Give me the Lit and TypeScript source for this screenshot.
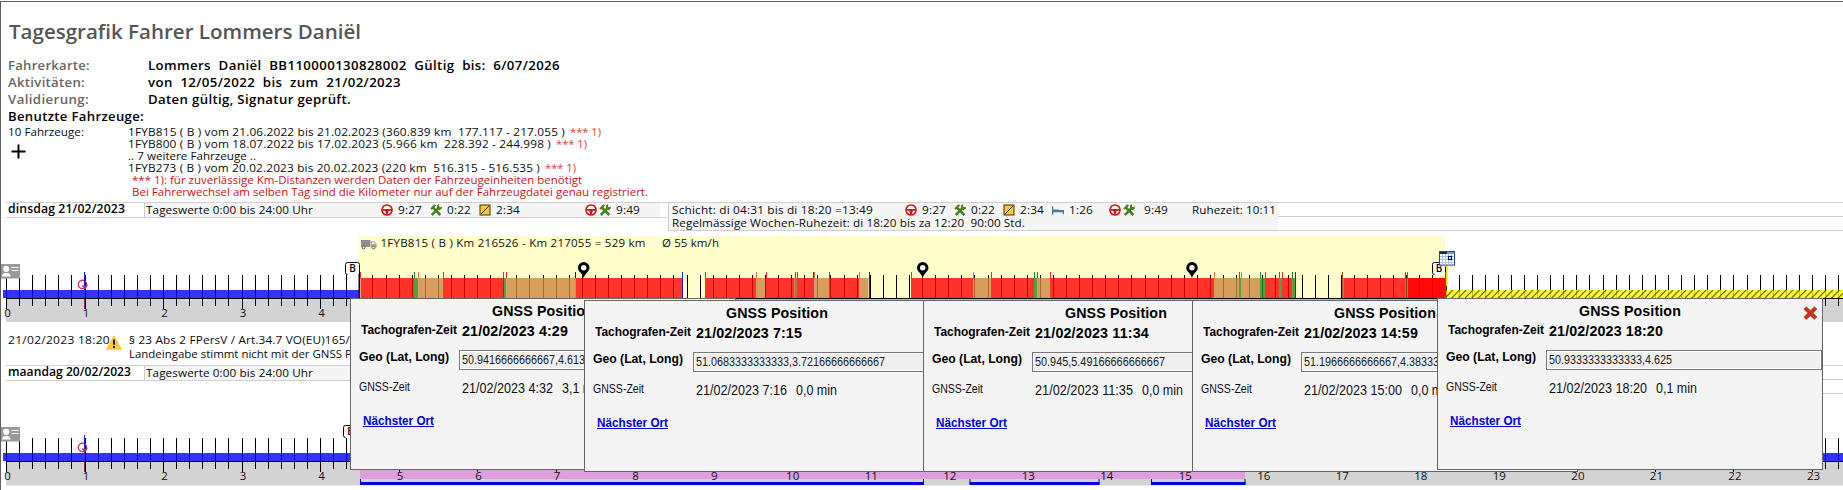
import { LitElement, html, svg, css } from "lit";
import { customElement, property } from "lit/decorators.js";

/** Single line of text fitted to a given width, partly by glyph scaling, partly by spacing. */
@customElement("fit-text")
class FitText extends LitElement {
  @property({ type: Number }) w = 0;
  @property() text = "";
  static styles = css`
    :host { display: inline-block; white-space: pre; flex: none; }
    .t { display: inline-block; white-space: pre; transform-origin: 0 50%; }
  `;
  render() {
    return html`<span class="t">${this.text}</span>`;
  }
  updated() {
    const t = this.renderRoot.querySelector(".t") as HTMLElement;
    t.style.letterSpacing = "0";
    const natural = t.getBoundingClientRect().width;
    const ratio = this.w / natural;
    const scale = ratio < 1 ? ratio : Math.pow(ratio, 0.5);
    t.style.letterSpacing = `${(this.w / scale - natural) / this.text.length}px`;
    t.style.transform = `scaleX(${scale})`;
    this.style.width = `${this.w}px`;
  }
}

const ft = (text: string, w: number, cls = "") =>
  html`<fit-text class=${cls} .text=${text} .w=${w}></fit-text>`;

const wheel = html`<svg class="ic" viewBox="0 0 12 12"><circle cx="6" cy="6" r="5" fill="#fff" stroke="#d01818" stroke-width="1.7"/><path d="M1.5 4.9h9v1.6l-2.9.4-.6 3.6H5l-.6-3.6-2.9-.4z" fill="#d01818"/></svg>`;
const tools = html`<svg class="ic" viewBox="0 0 12 12"><path d="M1.8 11L9.5 3.2M10.3 11L3 3.6" stroke="#4a8020" stroke-width="2.5" fill="none"/><path d="M.2 4.4L4.3.2l1.8 1.4L2 5.8zM6.8 1.4L9.2 0 8.9 2.4l1.2.9L12 2.5l-.4 2.4-2.3 1.3L7 3.6z" fill="#4a8020"/></svg>`;
const square = html`<svg class="ic" viewBox="0 0 12 12"><rect x="1" y="1" width="10" height="10" fill="#ffc832" stroke="#3a3010"/><path d="M2 10L10 2" stroke="#3a3010"/></svg>`;
const bed = html`<svg class="ic" viewBox="0 0 12 12"><path d="M.7 2.5v8M.7 7.6h10.8M11.3 6v4.2" stroke="#2f6f9f" stroke-width="1.2"/><path d="M1 5.4h3l7.5.8v1.8H1z" fill="#3d7eae"/></svg>`;

const X0 = 6.5;
const HOUR = 78.52;

const badge = (x: number, y: number, w = 14) => svg`
  <path d=${`M${x + 2.5} ${y + 12.5}q-2 0-2-2v-8q0-2 2-2h${w - 4}q2 0 2 2v9`} fill="#fff" stroke="#000"/>
  <text class="b" x=${x + w / 2 + 0.5} y=${y + 9.5} text-anchor="middle">B</text>`;

const cardIcon = (y: number) => svg`
  <g transform=${`translate(1 ${y})`}>
    <rect width="19" height="14.5" fill="#999"/>
    <circle cx="5.2" cy="4.8" r="3.1" fill="#fff"/>
    <path d="M.8 12.5q.5-3 3-3.4h3q2.5.4 3 3.4z" fill="#fff"/>
    <path d="M10.5 3.5h7M10.5 6.5h7" stroke="#fff" stroke-width="1.2"/>
  </g>`;

const pin = (x: number) => svg`
  <path d=${`M${x} 278C${x - 1.5} 273 ${x - 5.8} 271.5 ${x - 5.8} 267.8a5.8 5.8 0 0 1 11.6 0C${x + 5.8} 271.5 ${x + 1.5} 273 ${x} 278z`} fill="#000"/>
  <circle cx=${x} cy="267.8" r="2.7" fill="#fff"/>`;

const scaleStrip = (y: number) => svg`
  <rect x="6" y=${y + 1} width="1837" height="23.5" fill="#d3d3d3"/>`;
const ticks = (y: number) => svg`
  ${Array.from({ length: 141 }, (_, i) => {
    const x = Math.round(X0 + (i * HOUR) / 6 - 0.5);
    const hour = i % 6 === 0;
    return svg`<rect x=${x} y=${y - 23} width="1" height=${hour ? 34 : 31} fill="#000"/>`;
  })}`;
const labels = (y: number) => svg`
  ${Array.from({ length: 24 }, (_, h) => svg`<text class="h" x=${X0 + h * HOUR + 1} y=${y + 18.5} text-anchor="middle">${h}</text>`)}`;
const startMark = (y: number) => svg`
  <circle cx="82.5" cy=${y - 13.5} r="4.2" fill="none" stroke="#e0304a" stroke-width="1.4"/>
  <rect x="84" y=${y - 26} width="1" height="18" fill="#2020d0"/>
  <path d=${`M81.5 ${y - 12.5}h6.5l-3.3 4z`} fill="#a030a0"/>
  <path d=${`M84.5 ${y + 1}v10`} stroke="#803060"/>`;

const RED = "#ff0000", TAN = "#cd853f", GREEN = "#228b22", BROWN = "#8b5a20", BLUE = "#3030d0";
const segments: [number, number, string][] = [
  [360.5, 414, RED], [414, 418, GREEN], [418, 443, TAN], [443, 503, RED], [503, 506.4, GREEN],
  [506.4, 575.5, TAN], [575.5, 682, RED], [705, 756, RED], [756, 765, TAN], [765, 794.5, RED],
  [794.5, 797, BROWN], [797, 813, RED], [813, 814.3, BLUE], [814.3, 829, TAN], [829, 859, RED],
  [859, 868.5, TAN], [911, 973, RED], [973, 991, TAN], [991, 1034, RED], [1034, 1037, GREEN],
  [1037, 1050, TAN], [1050, 1214, RED], [1214, 1239, TAN], [1239, 1241, GREEN], [1241, 1260, TAN],
  [1260, 1265, GREEN], [1265, 1279, RED], [1279, 1282, GREEN], [1282, 1292, RED], [1292, 1295, GREEN],
  [1342, 1343.6, BROWN], [1343.6, 1405, RED], [1405, 1407.5, BROWN], [1407.5, 1445, RED],
];
const marks: [number, string, number][] = [
  [360, "#e03030", 278], [414, GREEN, 278], [418, "#d08050", 278], [443, "#e03030", 278],
  [503, GREEN, 278], [506, "#e03030", 278], [575, "#400000", 278], [682, "#2020d0", 298],
  [705, "#e03030", 278], [756, TAN, 278], [766, "#e03030", 278], [795, GREEN, 278], [797, "#c04020", 278],
  [813, "#2020d0", 278], [814, TAN, 278], [829, "#e03030", 278], [859, TAN, 278], [869, "#2020d0", 298],
  [911, "#e03030", 278], [973, TAN, 278], [991, "#e03030", 278], [1034, GREEN, 278], [1037, "#e03030", 278],
  [1050, "#e03030", 278], [1214, TAN, 278], [1239, GREEN, 278], [1241, TAN, 278], [1260, GREEN, 278],
  [1265, "#e03030", 278], [1279, GREEN, 278], [1282, "#e03030", 278], [1292, GREEN, 278],
  [1295, "#2020d0", 298], [1342, "#a05020", 298], [1405, GREEN, 278], [1407, "#e03030", 278],
];

interface Pos {
  cls: string; time: string; timeW: number; geo: string; geoW: number;
  gnss: string; gnssW: number; delta: string; deltaW: number; close?: boolean;
}
const positions: Pos[] = [
  { cls: "p1", time: "21/02/2023 4:29", timeW: 106, geo: "50.9416666666667,4.61333333333333", geoW: 189, gnss: "21/02/2023 4:32", gnssW: 91, delta: "3,1 min", deltaW: 41 },
  { cls: "p2", time: "21/02/2023 7:15", timeW: 106, geo: "51.0683333333333,3.72166666666667", geoW: 189, gnss: "21/02/2023 7:16", gnssW: 91, delta: "0,0 min", deltaW: 41 },
  { cls: "p3", time: "21/02/2023 11:34", timeW: 114, geo: "50.945,5.49166666666667", geoW: 130, gnss: "21/02/2023 11:35", gnssW: 98, delta: "0,0 min", deltaW: 41 },
  { cls: "p4", time: "21/02/2023 14:59", timeW: 114, geo: "51.1966666666667,4.38333333333333", geoW: 189, gnss: "21/02/2023 15:00", gnssW: 98, delta: "0,0 min", deltaW: 41 },
  { cls: "p5", time: "21/02/2023 18:20", timeW: 114, geo: "50.9333333333333,4.625", geoW: 123, gnss: "21/02/2023 18:20", gnssW: 98, delta: "0,1 min", deltaW: 41, close: true },
];

@customElement("app-root")
class AppRoot extends LitElement {
  static styles = css`
    :host { display: block; width: 1843px; height: 490px; overflow: hidden; position: relative; background: #fff; }
    .page {
      box-sizing: border-box; height: 490px; margin-top: 1px; border-top: 1px solid #606060; border-left: 1px solid #606060;
      font-family: "Open Sans", "Noto Sans", sans-serif; font-size: 11.5px; color: #0c0c0c; display: flex; flex-direction: column;
    }
    .head { padding: 15px 0 0 7px; height: 185px; box-sizing: border-box; flex: none; }
    .title { font-size: 20.5px; line-height: 29px; height: 40px; font-weight: 600; color: #555; padding-left: 1px; }
    .line { display: flex; font-size: 12.5px; line-height: 17px; height: 17px; font-weight: 600; color: #000; }
    .lab { color: #666; width: 140px; flex: none; }
    .cars { display: flex; margin-top: 1px; line-height: 12px; }
    .count { width: 120px; flex: none; }
    .count svg { display: block; margin: 6px 0 0 3px; }
    .car { display: flex; gap: 5px; height: 12px; }
    .red { color: #d01414; }
    .soft { color: #e03c3c; }
    .ind { padding-left: 4px; }
    .day { display: flex; height: 29px; line-height: 13px; margin: 15px 0 0 5px; box-sizing: border-box; border-top: 1px solid #d0d0d0; flex: none; }
    .strip { display: flex; width: 661px; height: 15px; border-bottom: 1px solid #d0d0d0; box-sizing: border-box; }
    .name { width: 138px; box-sizing: border-box; padding-left: 2px; font-weight: 600; font-size: 12px; line-height: 12px; color: #000; flex: none; }
    .vals { display: flex; width: 516px; box-sizing: border-box; background: #f5f5f5; border-left: 1px solid #ccc; padding-left: 1px; }
    .stats { display: flex; gap: 8px; }
    .own { margin-left: 68px; }
    .stat { display: flex; gap: 5px; }
    .ic { width: 12px; height: 12px; flex: none; margin-top: 1px; }
    .duo { display: flex; gap: 2px; margin-left: 65px; }
    .duo fit-text { margin-left: 3px; }
    .shift { width: 610px; box-sizing: border-box; background: #f5f5f5; border-left: 1px solid #ccc; border-bottom: 1px solid #d0d0d0; padding-left: 3px; flex: none; margin-left: 1px; }
    .row { display: flex; height: 13px; }
    .shift .stats { margin-left: 32px; }
    .shift .duo { margin-left: 16px; }
    .shift .duo fit-text { margin-left: 7px; }
    .rest { margin-left: 24px; }
    .fill { flex: 1; border-bottom: 1px solid #d0d0d0; }
    .fill::before { content: ""; display: block; height: 13px; border-bottom: 1px solid #d0d0d0; }
    .plot { display: block; flex: none; margin-left: -1px; }
    .notes { display: flex; height: 43px; box-sizing: border-box; padding: 11px 0 0 7px; line-height: 14px; flex: none; }
    .notes svg { display: block; margin: 2px 7px 0 -4px; flex: none; z-index: 1; }
    .day.second { margin-top: 0; }
    .h { font-size: 11.5px; fill: #111; }
    .b { font-size: 10px; font-weight: 600; fill: #000; }
    .panel {
      position: absolute; width: 386px; height: 172px; box-sizing: border-box; background: #f4f4f4; border: 1px solid #666;
      font-family: "Liberation Sans", Arial, sans-serif; color: #000; overflow: hidden;
    }
    .p1 { left: 350px; top: 298px; } .p2 { left: 584px; top: 300px; } .p3 { left: 923px; top: 300px; }
    .p4 { left: 1192px; top: 300px; } .p5 { left: 1437px; top: 298px; }
    .ptitle { display: flex; padding-left: 141px; font-weight: 700; font-size: 14px; line-height: 16px; height: 20px; padding-top: 4px; box-sizing: border-box; }
    .close { margin: 3px 0 0 122px; display: block; flex: none; }
    .prow { display: flex; }
    .tacho { height: 31px; font-weight: 700; font-size: 14px; line-height: 20px; padding: 2px 0 0 10px; box-sizing: border-box; }
    .tacho .k { font-size: 12.5px; line-height: 18px; width: 101px; }
    .geo { height: 21px; padding-left: 8px; font-weight: 700; font-size: 13px; line-height: 13px; }
    .geo .k { width: 100px; }
    .box { box-sizing: border-box; width: 276px; height: 20px; border: 1px solid #777; background: #efefef; box-shadow: inset 0 0 0 1px #fff; padding-left: 2px; font-size: 13px; font-weight: 400; line-height: 17px; color: #1c1c1c; }
    .gn { height: 24px; margin-top: 5px; padding-left: 8px; font-size: 14px; line-height: 24px; color: #111; }
    .gn .k { font-size: 13px; width: 103px; line-height: 22px; }
    .gn .d { margin-left: 9px; }
    .k { flex: none; }
    .ort { display: block; margin: 14px 0 0 12px; font-size: 13px; line-height: 14px; height: 13px; font-weight: 700; color: #0000dd; border-bottom: 1px solid #0000dd; width: 71px; box-sizing: border-box; }
  `;

  car(a: string, w: number) {
    return html`<div class="car">${ft(a, w)}${ft("*** 1)", 31, "soft")}</div>`;
  }

  stat(icon: unknown, t: string) {
    return html`<div class="stat">${icon}${ft(t, 24)}</div>`;
  }

  panel(p: Pos) {
    return html`<div class="panel ${p.cls}">
      <div class="ptitle">${ft("GNSS Position", 102)}${p.close
        ? html`<svg class="close" width="15" height="14" viewBox="0 0 15 14"><path d="M3.2.8L7.5 4.4 11.6.8 14 3 10.1 7l3.9 4-2.6 2.4L7.5 9.8l-4.2 3.6L.8 11 4.8 7 .8 3.2z" fill="#c8301c" stroke="#c8301c" stroke-width=".6"/></svg>`
        : ""}</div>
      <div class="prow tacho"><div class="k">${ft("Tachografen-Zeit", 96)}</div>${ft(p.time, p.timeW)}</div>
      <div class="prow geo"><div class="k">${ft("Geo (Lat, Long)", 90)}</div><div class="box">${ft(p.geo, p.geoW)}</div></div>
      <div class="prow gn"><div class="k">${ft("GNSS-Zeit", 51)}</div>${ft(p.gnss, p.gnssW)}${ft(p.delta, p.deltaW, "d")}</div>
      <a class="ort">${ft("Nächster Ort", 71)}</a>
    </div>`;
  }

  plotOne() {
    return html`<svg class="plot" width="1843" height="91" viewBox="0 231 1843 91">
      <defs><pattern id="hatch" width="13.33" height="8" patternUnits="userSpaceOnUse" y="290" x="1446">
        <path d="M-1 8L7 0M5.67 8L13.67 0M12.33 8L20.33 0M-7.67 8L.33 0" stroke="#000" stroke-width="1"/></pattern></defs>
      ${scaleStrip(298)}
      <rect x="358.5" y="236" width="1086.5" height="62" fill="#ffffcc"/>
      ${ticks(298)}
      <rect x="3" y="290" width="356" height="8" fill="#00f" opacity=".8"/>
      ${segments.map(([a, b, c], i) => svg`<rect x=${a} y="278" width=${b - a} height="20" fill=${c} opacity=${i === segments.length - 1 ? 0.96 : 0.8}/>`)}
      <rect x="1446" y="290" width="397" height="8" fill="#ff0" opacity=".8"/>
      <rect x="1446" y="290" width="397" height="8" fill="url(#hatch)" opacity=".75"/>
      ${marks.map(([x, c, y]) => svg`<rect x=${x} y="272" width="1" height=${y - 272} fill=${c}/>`)}
      <rect x="6" y="298" width="1837" height="1" fill="#000"/>
      <rect x="359" y="299" width="1086" height="1" fill="#dda0dd"/>
      <rect x="358.5" y="272" width="1.5" height="27" fill="#00003c"/>
      ${labels(298)}
      ${cardIcon(264)}${startMark(298)}${badge(345, 262)}
      <g transform="translate(361 240)">
        <path d="M0 0h9.5v7H0z" fill="#8f8f8f"/><path d="M10 1.2h3.4L15.7 4v3.6H10z" fill="#aaa"/>
        <path d="M11 2.2h2.2l1.2 1.8H11z" fill="#eee"/>
        <circle cx="2.6" cy="7.5" r="1.4" fill="#fff" stroke="#333" stroke-width=".8"/><circle cx="12.6" cy="7.5" r="1.4" fill="#fff" stroke="#333" stroke-width=".8"/>
      </g>
      <text class="h" x="380.5" y="247" textLength="265" xml:space="preserve">1FYB815 ( B ) Km 216526 - Km 217055 = 529 km</text>
      <text class="h" x="662" y="247" textLength="57">Ø 55 km/h</text>
      ${pin(583.7)}${pin(922.7)}${pin(1192)}
      ${badge(1432, 262, 13)}
      <rect x="1446" y="266" width="2" height="20" fill="#ff0"/>
      <rect x="1445" y="272" width="1.2" height="26" fill="#706000"/>
      <g transform="translate(1439 251)">
        <rect x="1.5" y="1.5" width="15" height="14" fill="#f3dca8"/>
        <rect x=".5" y=".5" width="15" height="13.5" fill="#fff" stroke="#2a4a80"/>
        <rect x="1" y="1" width="14" height="2" fill="#7a9ad0"/><rect x="1" y="1" width="7" height="2" fill="#102a60"/>
        <path d="M3.5 3v11M6.5 3v11M9.5 3v11M12.5 3v11M1 5.5h14M1 8.5h14M1 11.5h14" stroke="#b0c4de"/>
        <rect x="9.5" y="5.5" width="3" height="3" fill="#fff" stroke="#001a66" stroke-width="1.2"/>
      </g>
    </svg>`;
  }

  plotTwo() {
    const work: [number, number][] = [[360, 924], [969.5, 1099.5], [1151, 1245.5]];
    return html`<svg class="plot" width="1843" height="96" viewBox="0 394 1843 96">
      ${scaleStrip(461)}
      <rect x="360" y="462" width="885" height="17" fill="#dda0dd"/>
      ${ticks(461)}
      <rect x="3" y="453" width="1840" height="8" fill="#00f" opacity=".8"/>
      <rect x="6" y="461" width="1837" height="1" fill="#000"/>
      ${work.map(([a, b]) => svg`<path d=${`M${a + 0.5} 479v4.5H${b - 0.5}V479`} fill="none" stroke="#0000d8"/><rect x=${a} y="482" width=${b - a} height="3" fill="#0000d8"/>`)}
      ${labels(461)}
      ${cardIcon(427)}${startMark(461)}${badge(343, 425)}
    </svg>`;
  }

  render() {
    return html`<div class="page">
      <div class="head">
        <div class="title">${ft("Tagesgrafik Fahrer Lommers Daniël", 352)}</div>
        <div class="line"><div class="lab">${ft("Fahrerkarte:", 82)}</div>${ft("Lommers  Daniël  BB110000130828002  Gültig  bis:  6/07/2026", 412)}</div>
        <div class="line"><div class="lab">${ft("Aktivitäten:", 77)}</div>${ft("von  12/05/2022  bis  zum  21/02/2023", 253)}</div>
        <div class="line"><div class="lab">${ft("Validierung:", 81)}</div>${ft("Daten gültig, Signatur geprüft.", 203)}</div>
        <div class="line">${ft("Benutzte Fahrzeuge:", 136)}</div>
        <div class="cars">
          <div class="count">${ft("10 Fahrzeuge:", 76)}
            <svg width="15" height="15" viewBox="0 0 15 15"><path d="M7.5 .5v14M.5 7.5h14" stroke="#000" stroke-width="2"/></svg>
          </div>
          <div>
            ${this.car("1FYB815 ( B ) vom 21.06.2022 bis 21.02.2023 (360.839 km  177.117 - 217.055 )", 437)}
            ${this.car("1FYB800 ( B ) vom 18.07.2022 bis 17.02.2023 (5.966 km  228.392 - 244.998 )", 423)}
            <div class="car">${ft(".. 7 weitere Fahrzeuge ..", 128)}</div>
            ${this.car("1FYB273 ( B ) vom 20.02.2023 bis 20.02.2023 (220 km  516.315 - 516.535 )", 412)}
            <div class="car red ind">${ft("*** 1): für zuverlässige Km-Distanzen werden Daten der Fahrzeugeinheiten benötigt", 450)}</div>
            <div class="car red ind">${ft("Bei Fahrerwechsel am selben Tag sind die Kilometer nur auf der Fahrzeugdatei genau registriert.", 516)}</div>
          </div>
        </div>
      </div>

      <div class="day">
        <div class="strip">
          <div class="name">${ft("dinsdag 21/02/2023", 117)}</div>
          <div class="vals">${ft("Tageswerte 0:00 bis 24:00 Uhr", 167)}
            <div class="stats own">${this.stat(wheel, "9:27")}${this.stat(tools, "0:22")}${this.stat(square, "2:34")}</div>
            <div class="duo">${wheel}${tools}${ft("9:49", 24)}</div>
          </div>
        </div>
        <div class="shift">
          <div class="row">${ft("Schicht: di 04:31 bis di 18:20 =13:49", 201)}
            <div class="stats">${this.stat(wheel, "9:27")}${this.stat(tools, "0:22")}${this.stat(square, "2:34")}${this.stat(bed, "1:26")}</div>
            <div class="duo">${wheel}${tools}${ft("9:49", 24)}</div>
            <div class="rest">${ft("Ruhezeit: 10:11", 84)}</div>
          </div>
          <div class="row">${ft("Regelmässige Wochen-Ruhezeit: di 18:20 bis za 12:20  90:00 Std.", 353)}</div>
        </div>
        <div class="fill"></div>
      </div>
      ${this.plotOne()}

      <div class="notes">
        ${ft("21/02/2023 18:20", 102)}
        <svg width="16" height="15" viewBox="0 0 16 15"><path d="M8 .8L15.5 14.3H.5z" fill="#ffc83d" stroke="#ffc83d" stroke-linejoin="round"/><rect x="7" y="4.5" width="2" height="5.2" fill="#222"/><rect x="7" y="11" width="2" height="2" fill="#222"/></svg>
        <div>
          <div>${ft("§ 23 Abs 2 FPersV / Art.34.7 VO(EU)165/", 221)}</div>
          <div>${ft("Landeingabe stimmt nicht mit der GNSS Position", 259)}</div>
        </div>
      </div>

      <div class="day second">
        <div class="strip">
          <div class="name">${ft("maandag 20/02/2023", 123)}</div>
          <div class="vals">${ft("Tageswerte 0:00 bis 24:00 Uhr", 167)}</div>
        </div>
        <div class="fill"></div>
      </div>
      ${this.plotTwo()}
    </div>
    ${positions.map((p) => this.panel(p))}`;
  }
}
